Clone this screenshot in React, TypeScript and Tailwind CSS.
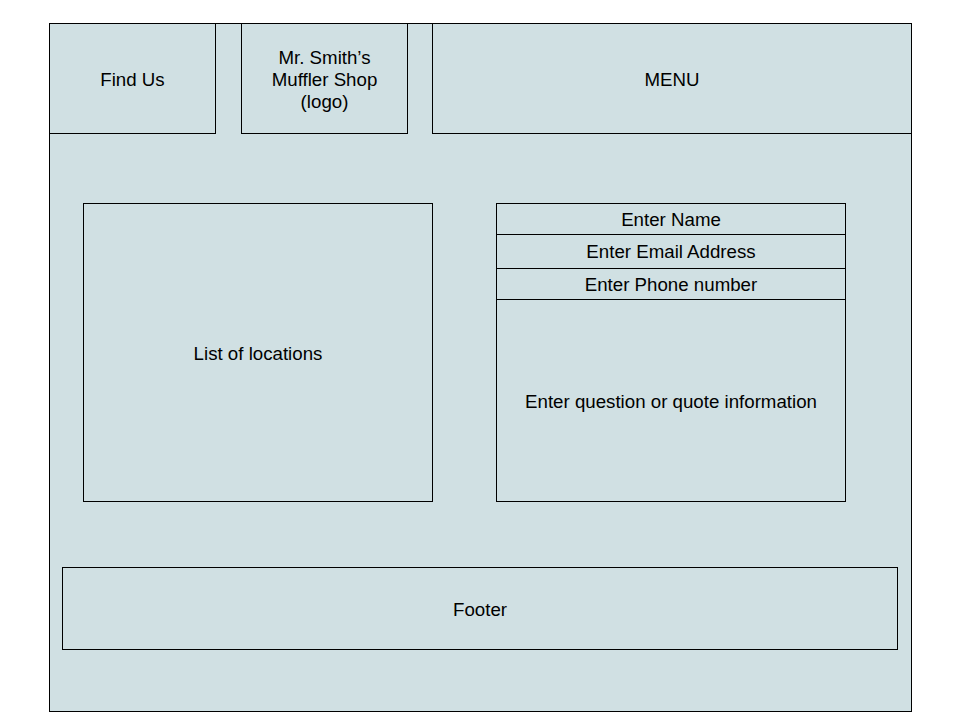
export default function App() {
  return (
    <div className="min-h-[720px] bg-white pt-[23px] pl-[49px] font-['Liberation_Sans',Arial,sans-serif] text-[18.7px] text-black">
      <div className="flex h-[689px] w-[863px] flex-col border border-black bg-[#d0e0e3]">
        {/* header */}
        <div className="flex h-[110px]">
          <div className="flex w-[166px] items-center justify-center border-r border-b border-black pt-[3px]">Find Us</div>
          <div className="w-[25px]" />
          <div className="flex w-[167px] items-center justify-center border-x border-b border-black pt-[3px] text-center leading-[22px]">
            Mr. Smith’s
            <br />
            Muffler Shop
            <br />
            (logo)
          </div>
          <div className="w-[24px]" />
          <div className="flex flex-1 items-center justify-center border-l border-b border-black pt-[3px]">MENU</div>
        </div>

        {/* body */}
        <div className="mt-[69px] ml-[33px] flex gap-[63px]">
          <div className="flex h-[299px] w-[350px] items-center justify-center border border-black pt-[3px]">List of locations</div>
          <div className="flex h-[299px] w-[350px] flex-col border border-black">
            <div className="flex h-[31px] items-center justify-center border-b border-black pt-[2px]">Enter Name</div>
            <div className="flex h-[34px] items-center justify-center border-b border-black pt-[2px]">Enter Email Address</div>
            <div className="flex h-[31px] items-center justify-center border-b border-black pt-[2px]">Enter Phone number</div>
            <div className="flex flex-1 items-center justify-center pt-[3px]">Enter question or quote information</div>
          </div>
        </div>

        {/* footer */}
        <div className="mt-[65px] ml-[12px] flex h-[83px] w-[836px] items-center justify-center border border-black pt-[3px]">Footer</div>
      </div>
    </div>
  );
}
